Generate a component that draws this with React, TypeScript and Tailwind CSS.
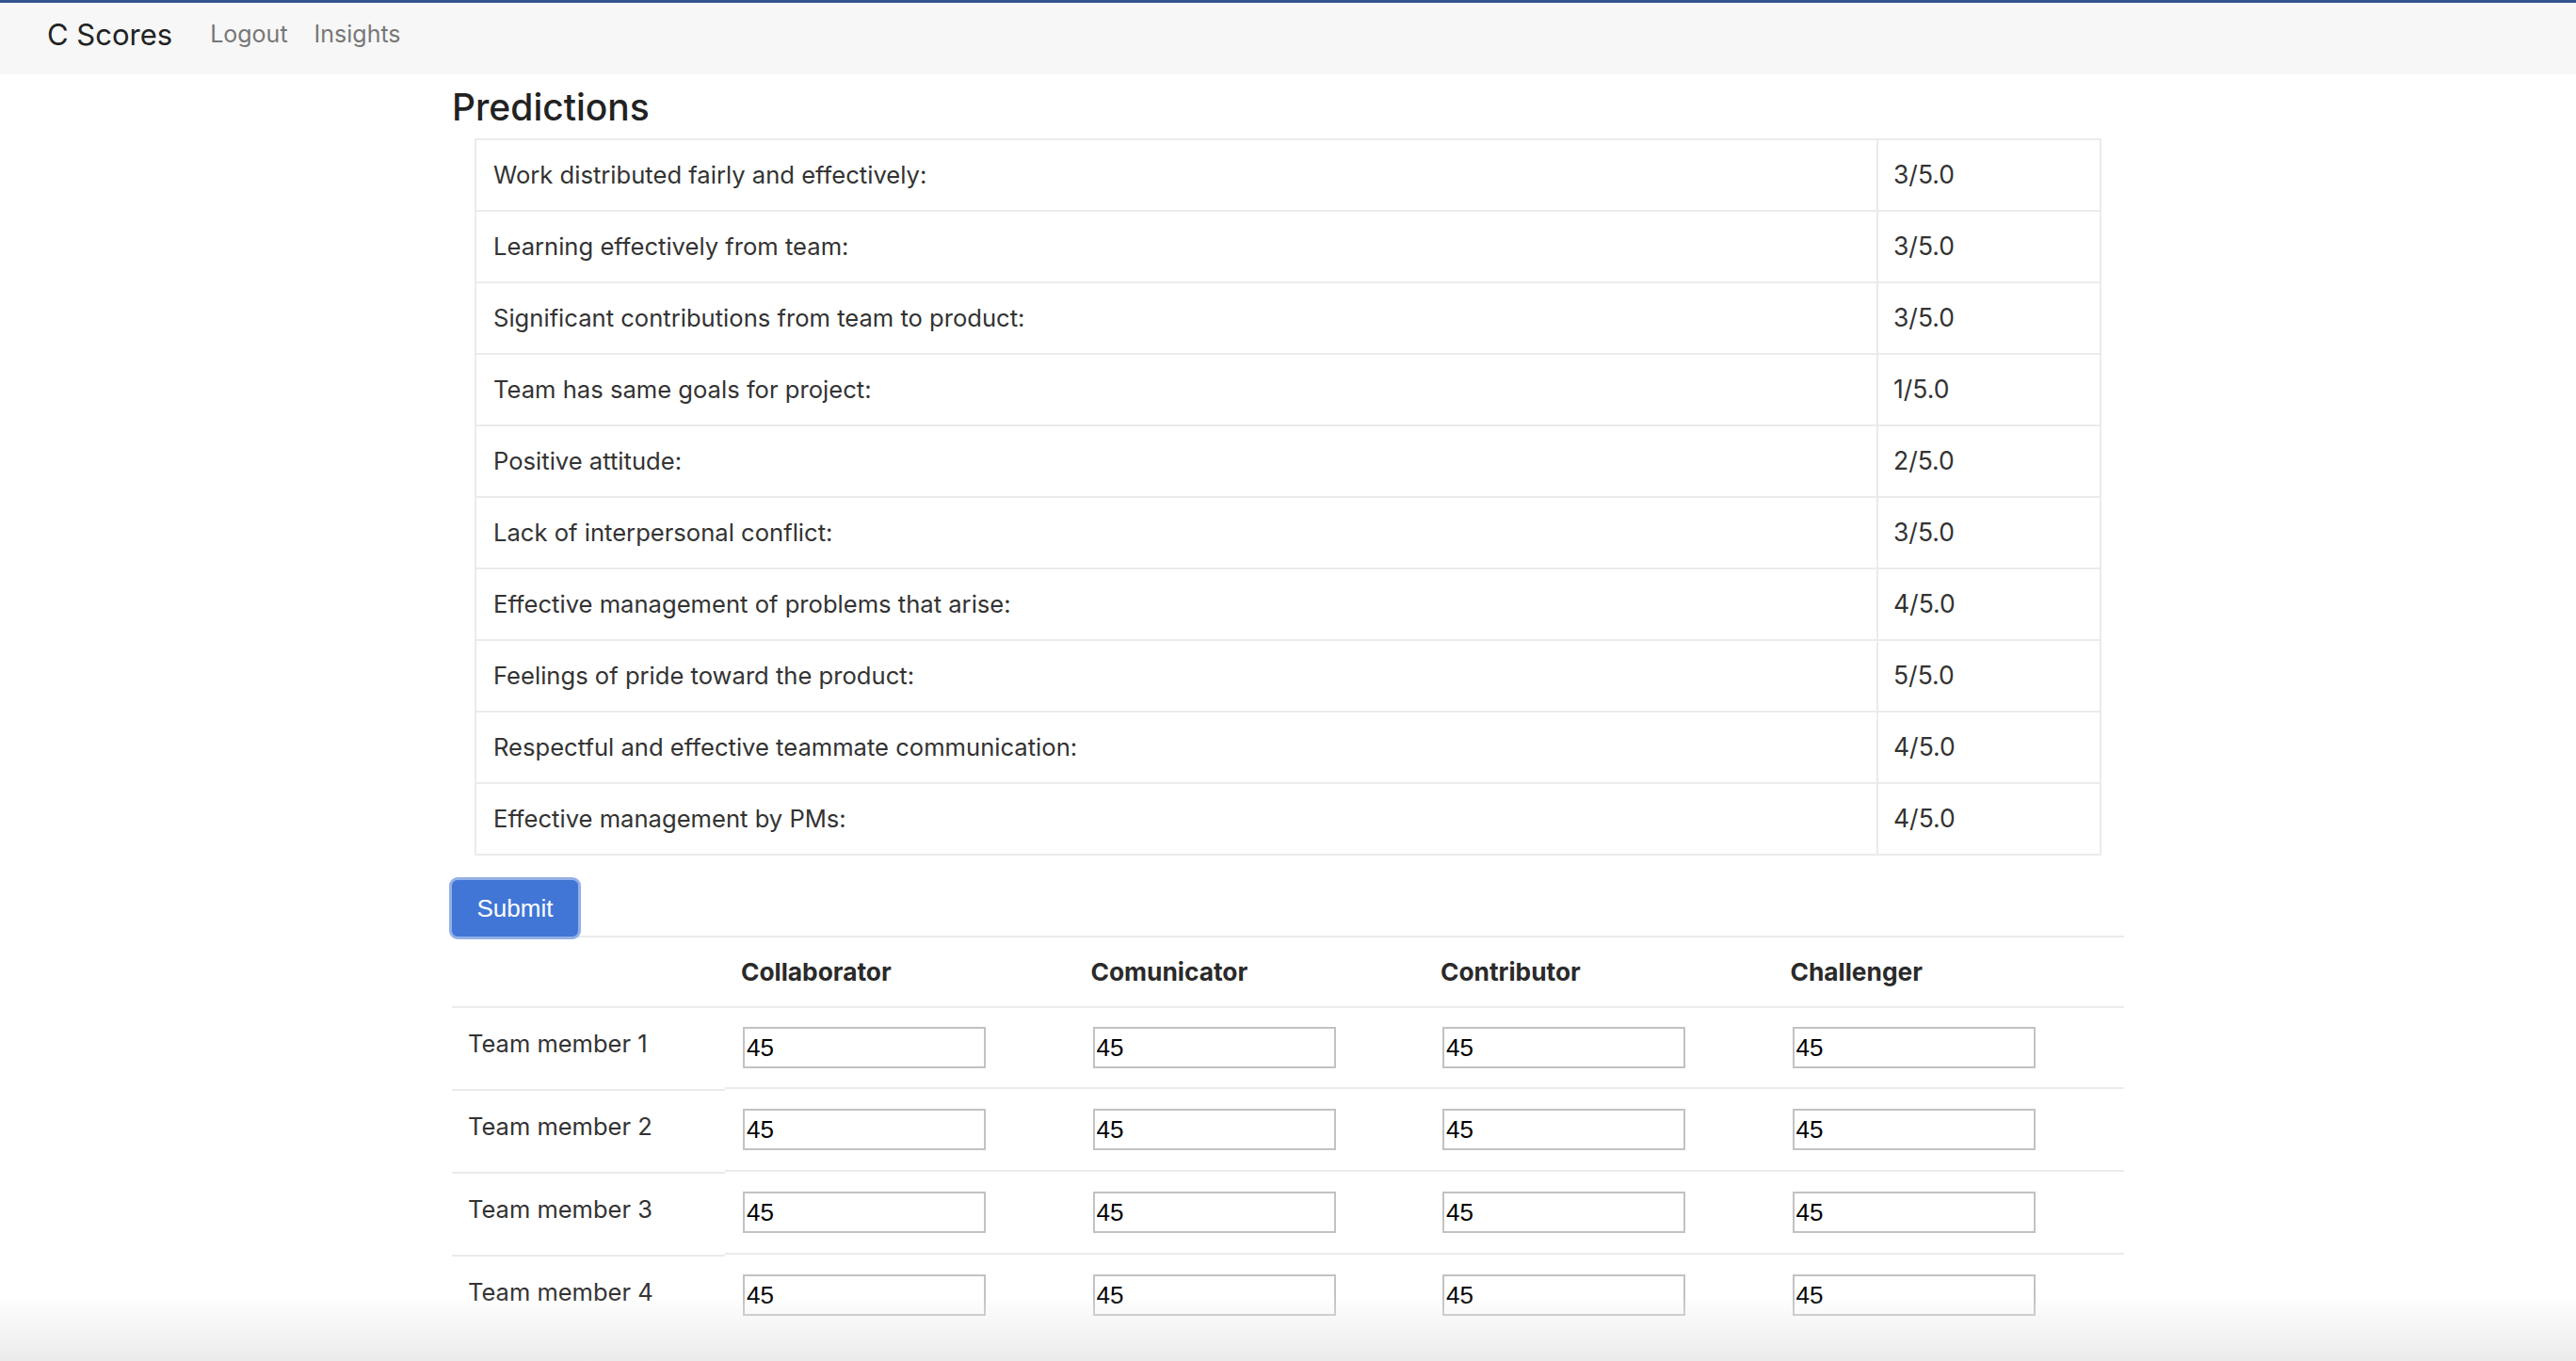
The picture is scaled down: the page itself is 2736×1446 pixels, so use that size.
import React from 'react'

const predictions: [string, string][] = [
  ['Work distributed fairly and effectively:', '3/5.0'],
  ['Learning effectively from team:', '3/5.0'],
  ['Significant contributions from team to product:', '3/5.0'],
  ['Team has same goals for project:', '1/5.0'],
  ['Positive attitude:', '2/5.0'],
  ['Lack of interpersonal conflict:', '3/5.0'],
  ['Effective management of problems that arise:', '4/5.0'],
  ['Feelings of pride toward the product:', '5/5.0'],
  ['Respectful and effective teammate communication:', '4/5.0'],
  ['Effective management by PMs:', '4/5.0'],
]

const roles = ['Collaborator', 'Comunicator', 'Contributor', 'Challenger']
const members = ['Team member 1', 'Team member 2', 'Team member 3', 'Team member 4']

function ScoreInput() {
  return (
    <input
      defaultValue="45"
      className="w-[258px] h-[44px] border-2 border-[#c2c2c2] bg-white pl-[2px] text-[26px] text-black outline-none font-['Liberation_Sans',Arial,sans-serif]"
    />
  )
}

export default function App() {
  return (
    <div className="min-h-screen bg-white text-[#333] font-['Inter','Liberation_Sans',sans-serif]">
      {/* navbar */}
      <div className="border-t-[3px] border-[#34538f] bg-[#f7f7f7] h-[79px] flex items-center pl-[50px] pb-[8px]">
        <span className="text-[31px] text-[#222] mr-[40px]">C Scores</span>
        <a className="text-[25px] text-[#777] mr-[28px]">Logout</a>
        <a className="text-[25px] text-[#777]">Insights</a>
      </div>

      <div className="w-[1776px] mx-auto">
        <h3 className="mt-[11px] h-[48px] leading-[48px] text-[39px] font-medium text-[#222]">Predictions</h3>

        <table className="mt-[9px] mx-[24px] w-[1728px] border-collapse text-[25.6px]">
          <tbody>
            {predictions.map(([label, score]) => (
              <tr key={label}>
                <td className="h-[76px] border-2 border-[#ebebeb] pl-[18px] align-middle">{label}</td>
                <td className="h-[76px] w-[237px] border-2 border-[#ebebeb] pl-[16px] align-middle text-[26.5px]">{score}</td>
              </tr>
            ))}
          </tbody>
        </table>

        <button className="mt-[23px] -ml-[3px] relative z-10 w-[140px] h-[66px] rounded-[9px] bg-[#4176d6] border-[3px] border-[#94b0e6] text-white text-[26px] font-['Liberation_Sans',Arial,sans-serif]">
          Submit
        </button>

        <div className="-mt-[4px] flex">
          {/* name column */}
          <div className="w-[290px] flex flex-col">
            <div className="h-[75px] border-t-2 border-[#ebebeb]" />
            {members.map((m) => (
              <div key={m} className="h-[88px] border-t-2 border-[#ebebeb] pl-[17px] pt-[19px] text-[25.5px]">
                {m}
              </div>
            ))}
          </div>

          {/* score columns */}
          <div className="flex-1 flex flex-col">
            <div className="h-[75px] border-t-2 border-[#ebebeb] grid grid-cols-4 items-center">
              {roles.map((r) => (
                <div key={r} className="pl-[17px] text-[26.3px] font-bold text-[#2a2a2a]">
                  {r}
                </div>
              ))}
            </div>
            {members.map((m, i) => (
              <div
                key={m}
                className={`border-t-2 border-[#ebebeb] grid grid-cols-4 items-center ${i === 0 ? 'h-[86px]' : 'h-[88px]'}`}
              >
                {roles.map((r) => (
                  <div key={r} className="pl-[19px]">
                    <ScoreInput />
                  </div>
                ))}
              </div>
            ))}
          </div>
        </div>
      </div>

      <div className="fixed bottom-0 left-0 right-0 h-[70px] pointer-events-none bg-linear-to-b from-transparent to-[#ebebeb]" />
    </div>
  )
}
